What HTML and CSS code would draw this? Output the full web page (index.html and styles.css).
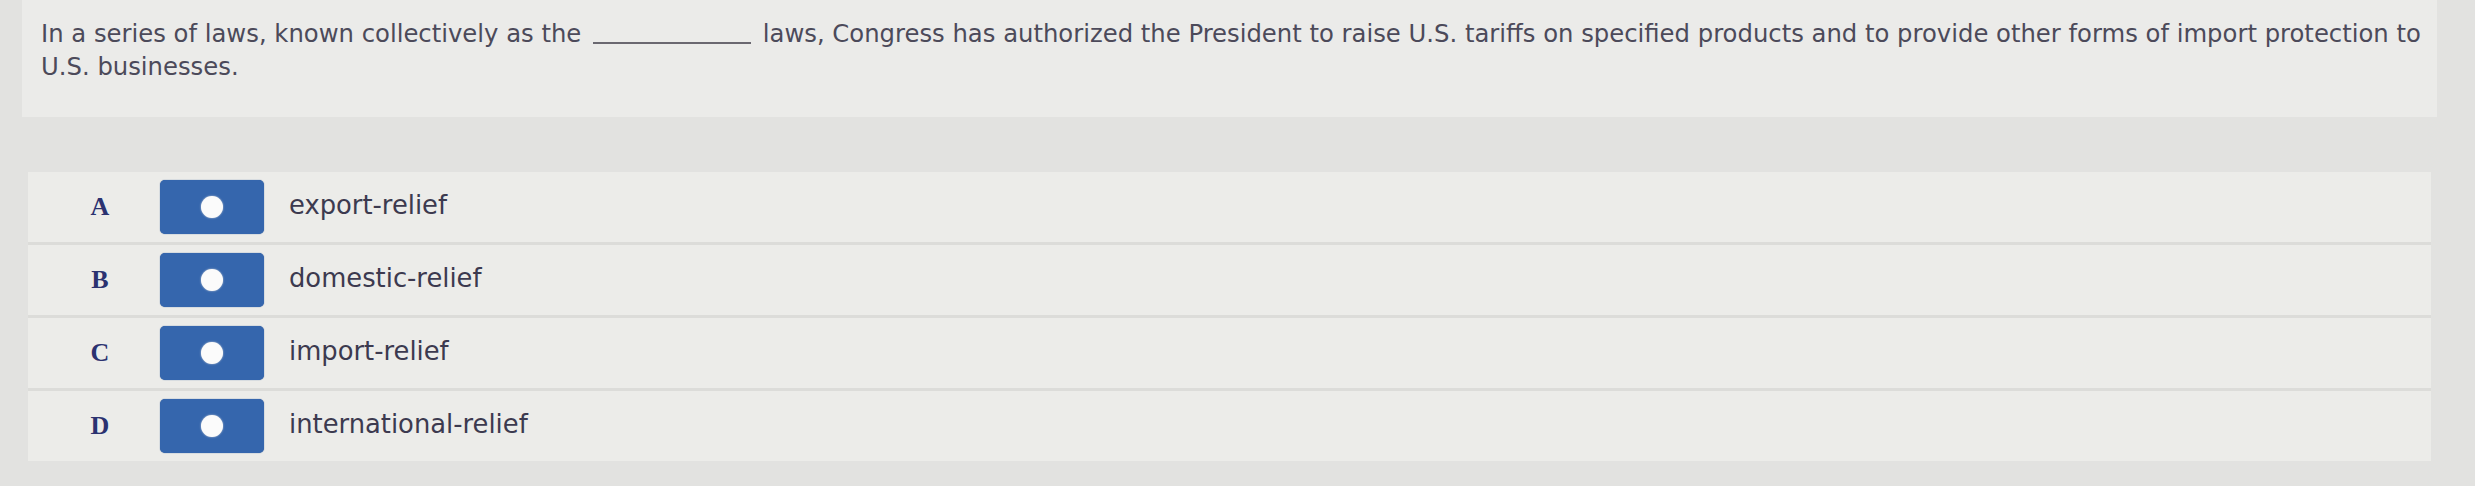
FILE: index.html
```html
<!DOCTYPE html>
<html lang="en">
<head>
<meta charset="utf-8">
<title>Question</title>
<link rel="stylesheet" href="styles.css">
</head>
<body>
<div class="page">
  <div class="question">
    <p class="stem">In a series of laws, known collectively as the <span class="blank"></span> laws, Congress has authorized the President to raise U.S. tariffs on specified products and to provide other forms of import protection to U.S. businesses.</p>
  </div>
  <div class="options">
    <div class="row">
      <span class="letter">A</span>
      <span class="radio"><span class="dot"></span></span>
      <span class="label">export-relief</span>
    </div>
    <div class="row">
      <span class="letter">B</span>
      <span class="radio"><span class="dot"></span></span>
      <span class="label">domestic-relief</span>
    </div>
    <div class="row">
      <span class="letter">C</span>
      <span class="radio"><span class="dot"></span></span>
      <span class="label">import-relief</span>
    </div>
    <div class="row">
      <span class="letter">D</span>
      <span class="radio"><span class="dot"></span></span>
      <span class="label">international-relief</span>
    </div>
  </div>
</div>
</body>
</html>
```
FILE: styles.css
```css
html, body {
  margin: 0;
  padding: 0;
}
body {
  background: #e2e2e0;
  width: 2475px;
  height: 486px;
  overflow: hidden;
}
.page {
  display: flex;
  flex-direction: column;
}
.question {
  margin-left: 22px;
  width: 2415px;
  height: 117px;
  box-sizing: border-box;
  padding: 17px 4px 0 19px;
  background: #ebebe9;
}
.stem {
  margin: 0;
  font-family: "DejaVu Sans", Verdana, sans-serif;
  font-size: 24.3px;
  line-height: 33px;
  color: #4c4a5a;
}
.blank {
  display: inline-block;
  width: 158px;
  height: 2px;
  background: #6a6870;
  vertical-align: baseline;
  margin: 0 4px;
  position: relative;
  top: 2px;
}
.options {
  margin-top: 55px;
  margin-left: 28px;
  width: 2403px;
  background: #ecece9;
  display: flex;
  flex-direction: column;
}
.row {
  height: 70px;
  display: flex;
  align-items: center;
}
.row + .row {
  border-top: 3px solid #dcdcd9;
}
.letter {
  width: 24px;
  margin-left: 60px;
  text-align: center;
  font-family: "Liberation Serif", "Times New Roman", serif;
  font-weight: bold;
  font-size: 26px;
  color: #2b3270;
}
.radio {
  margin-left: 48px;
  width: 104px;
  height: 54px;
  border-radius: 5px;
  background: #3566ad;
  display: flex;
  align-items: center;
  justify-content: center;
  box-shadow: 0 0 1px #27508e;
}
.dot {
  width: 22px;
  height: 22px;
  border-radius: 50%;
  background: #fbfbfb;
  box-shadow: 0 0 2px #c9cfd8;
}
.label {
  margin-left: 25px;
  font-family: "DejaVu Sans", Verdana, sans-serif;
  font-size: 25.8px;
  color: #3c3a4f;
  position: relative;
  top: -2px;
}
```
